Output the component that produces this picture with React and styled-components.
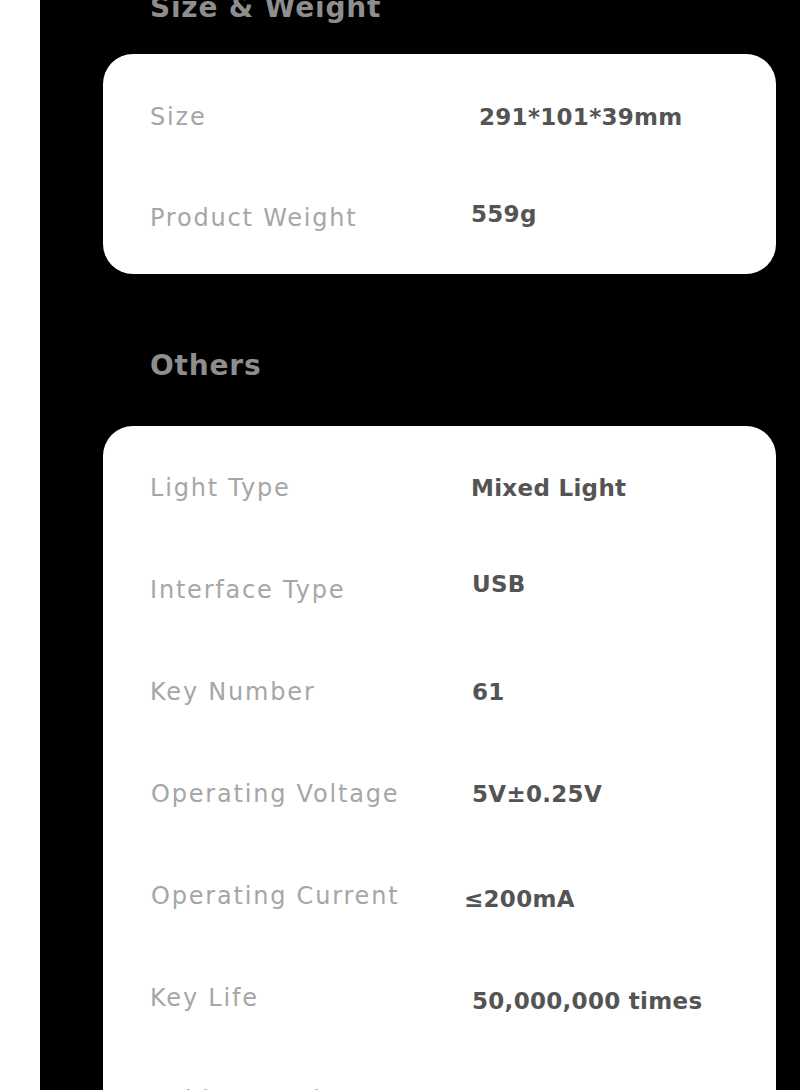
import styled, { createGlobalStyle } from "styled-components";

const GlobalStyle = createGlobalStyle`
  html, body {
    margin: 0;
    padding: 0;
    background: #ffffff;
  }
  body {
    font-family: "DejaVu Sans", "Liberation Sans", sans-serif;
  }
`;

const Page = styled.div`
  display: flex;
  height: 1090px;
  overflow: hidden;
  background: #ffffff;
`;

const Panel = styled.div`
  flex: 1;
  margin-left: 40px;
  padding: 0 24px 0 63px;
  background: #000000;
  display: flex;
  flex-direction: column;
`;

const Heading = styled.h2`
  margin: ${(p) => (p.$first ? "-9px 0 29px" : "75px 0 43px")};
  padding-left: 47px;
  height: 34px;
  line-height: 34px;
  font-size: 28px;
  font-weight: 700;
  color: #8e8e8e;
  letter-spacing: 0.8px;
`;

const Card = styled.div`
  background: #ffffff;
  border-radius: 30px;
  padding: ${(p) => p.$pad};
  display: flex;
  flex-direction: column;
  flex-shrink: 0;
`;

const Row = styled.div`
  display: grid;
  grid-template-columns: 321px 1fr;
  align-items: center;
  height: ${(p) => p.$h}px;
  padding-left: 47px;
`;

const Label = styled.span`
  font-size: 24px;
  color: #a6a6a6;
  letter-spacing: 1.8px;
  white-space: nowrap;
  margin-left: ${(p) => p.$dx || 0}px;
`;

const Value = styled.span`
  font-size: 23px;
  font-weight: 700;
  color: #545454;
  letter-spacing: 0.3px;
  white-space: nowrap;
  margin-left: ${(p) => p.$dx || 0}px;
  transform: translateY(${(p) => p.$dy || 0}px);
`;

const sizeRows = [
  { label: "Size", value: "291*101*39mm", dx: 8 },
  { label: "Product Weight", value: "559g", dy: -4 },
];

const otherRows = [
  { label: "Light Type", value: "Mixed Light" },
  { label: "Interface Type", value: "USB", dx: 1, dy: -6 },
  { label: "Key Number", value: "61", dx: 1 },
  { label: "Operating Voltage", value: "5V±0.25V", dx: 1, ldx: 1 },
  { label: "Operating Current", value: "≤200mA", dx: -7, ldx: 1, dy: 3 },
  { label: "Key Life", value: "50,000,000 times", dx: 1, dy: 3 },
  { label: "Cable Length", value: "1.5m", dx: 1 },
];

function SpecCard({ rows, pad, rowHeight }) {
  return (
    <Card $pad={pad}>
      {rows.map((r) => (
        <Row key={r.label} $h={rowHeight}>
          <Label $dx={r.ldx}>{r.label}</Label>
          <Value $dx={r.dx} $dy={r.dy}>
            {r.value}
          </Value>
        </Row>
      ))}
    </Card>
  );
}

export default function App() {
  return (
    <>
      <GlobalStyle />
      <Page>
        <Panel>
          <Heading $first>Size &amp; Weight</Heading>
          <SpecCard rows={sizeRows} pad="12px 0 6px" rowHeight={101} />
          <Heading>Others</Heading>
          <SpecCard rows={otherRows} pad="11px 0 40px" rowHeight={102} />
        </Panel>
      </Page>
    </>
  );
}
